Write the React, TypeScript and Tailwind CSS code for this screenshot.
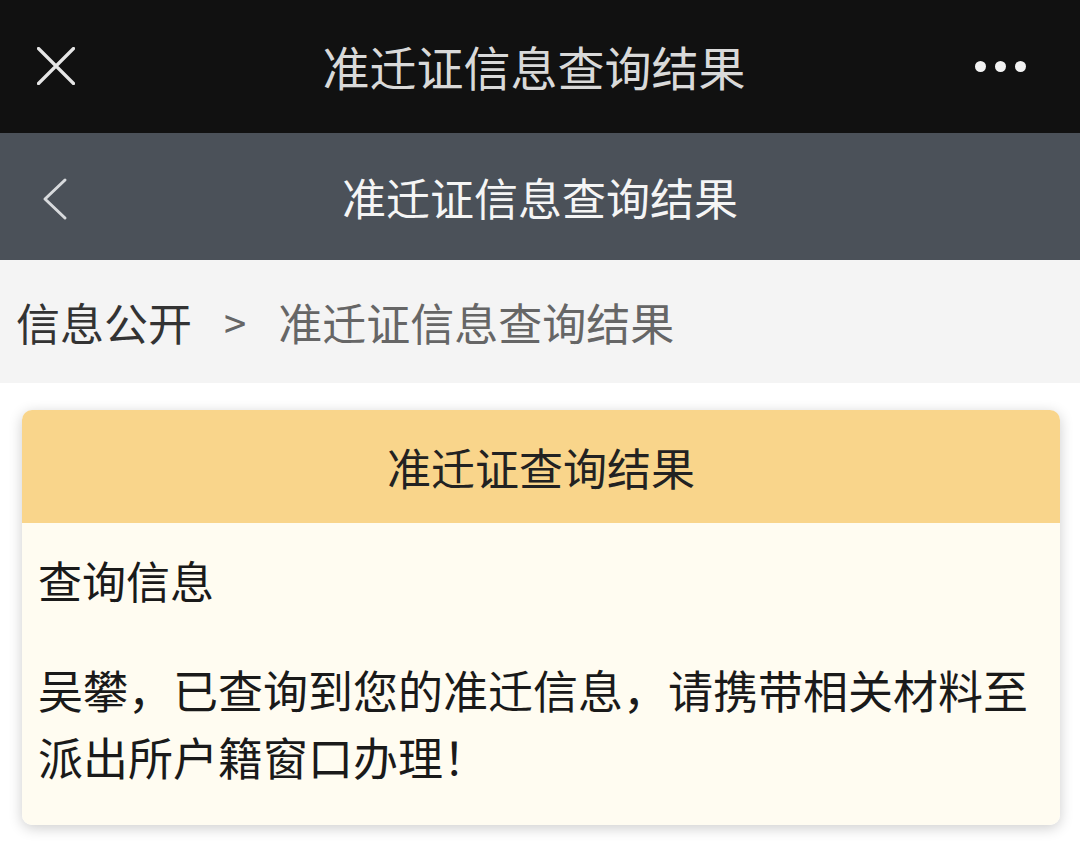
export default function App() {
  const font = { fontFamily: '"Noto Sans CJK SC", "Noto Sans", sans-serif' };

  return (
    <div className="w-[1080px] h-[860px] bg-white overflow-hidden" style={font}>
      {/* WeChat title bar */}
      <div className="relative h-[133px] bg-[#111111] flex items-center justify-center">
        <svg className="absolute left-[37px] top-[47px] w-[38px] h-[38px]" viewBox="0 0 38 38" fill="none" stroke="#e6e6e6" strokeWidth={3.2} strokeLinecap="round">
          <path d="M1.5 1.5L36.5 36.5M36.5 1.5L1.5 36.5" />
        </svg>
        <span className="text-[47px] leading-none text-[#d9d9d9] -translate-x-[6px] -translate-y-[1px]">准迁证信息查询结果</span>
        <div className="absolute right-[54px] top-[61px] flex gap-[9px]">
          <span className="w-[11px] h-[11px] rounded-full bg-[#f2f2f2]" />
          <span className="w-[11px] h-[11px] rounded-full bg-[#f2f2f2]" />
          <span className="w-[11px] h-[11px] rounded-full bg-[#f2f2f2]" />
        </div>
      </div>

      {/* page header */}
      <div className="relative h-[127px] bg-[#4b5159] flex items-center justify-center">
        <svg className="absolute left-[42px] top-[44px] w-[26px] h-[44px]" viewBox="0 0 26 44" fill="none" stroke="#d8dadd" strokeWidth={3} strokeLinecap="round" strokeLinejoin="round">
          <path d="M23 3L3 22L23 41" />
        </svg>
        <span className="text-[44px] leading-none text-[#f5f5f5]">准迁证信息查询结果</span>
      </div>

      {/* breadcrumb */}
      <div className="h-[123px] bg-[#f4f4f4] flex items-center pl-[16px] text-[44px] leading-none">
        <span className="text-[#333333]">信息公开</span>
        <span className="text-[#666666] text-[40px] mx-[32px]">&gt;</span>
        <span className="text-[#666666]">准迁证信息查询结果</span>
      </div>

      {/* result card */}
      <div className="pt-[27px] pl-[22px] pr-[20px]">
        <div className="rounded-[10px] overflow-hidden shadow-[0_3px_14px_rgba(0,0,0,0.2)]">
          <div className="h-[113px] bg-[#f9d58b] flex items-center justify-center">
            <span className="text-[44px] leading-none text-[#222222]">准迁证查询结果</span>
          </div>
          <div className="bg-[#fffcf1] pl-[16px] pr-[14px] pt-[27px] pb-[35px] text-[#1a1a1a]">
            <div className="text-[44px] leading-[60px]">查询信息</div>
            <p className="mt-[46px] text-[45px] leading-[67px]">
              吴攀，已查询到您的准迁信息，请携带相关材料至派出所户籍窗口办理！
            </p>
          </div>
        </div>
      </div>
    </div>
  );
}
